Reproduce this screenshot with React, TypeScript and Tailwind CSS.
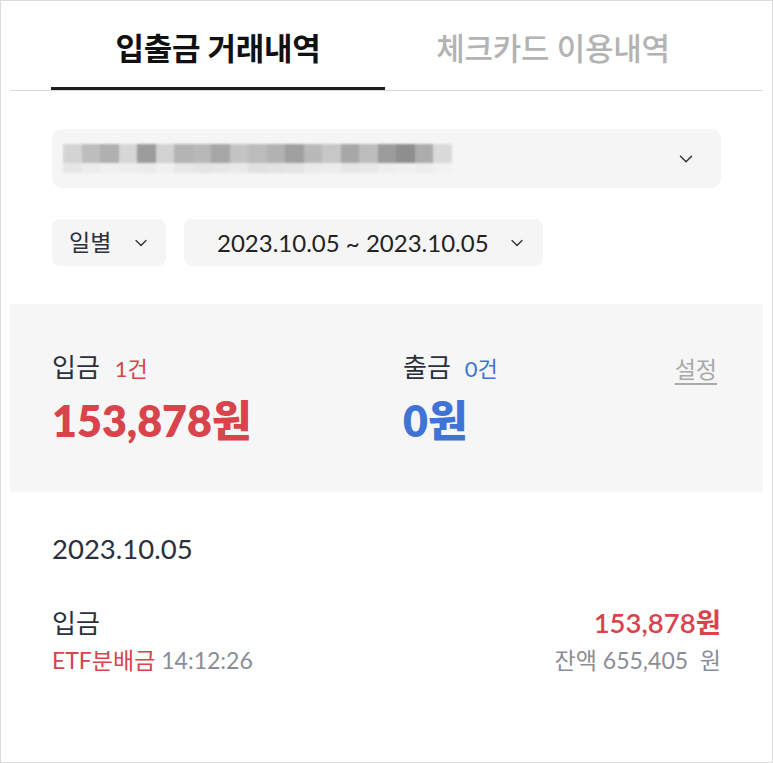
import { ChevronDown } from "lucide-react";

const font = { fontFamily: "Lato, 'Noto Sans CJK KR', sans-serif" };

const mosaic = [
  "#d4d4d4", "#bdbdbd", "#b0b0b0", "#d6d6d6", "#9c9c9c", "#d2d2d2", "#b4b4b4",
  "#b8b8b8", "#a6a6a6", "#c4c4c4", "#bcbcbc", "#b2b2b2", "#9f9f9f", "#b9b9b9",
  "#c7c7c7", "#a7a7a7", "#bdbdbd", "#9b9b9b", "#8e8e8e", "#acacac", "#dadada",
];

const mosaicLow = [
  "#e6e6e6", "#ececec", "#f0f0f0", "#eeeeee", "#ebebeb", "#f0f0f0", "#e8e8e8",
  "#e4e4e4", "#e6e6e6", "#e9e9e9", "#e0e0e0", "#e2e2e2", "#e4e4e4", "#eaeaea",
  "#ececec", "#e6e6e6", "#e8e8e8", "#eeeeee", "#f0f0f0", "#ededed", "#f2f2f2",
];

export default function App() {
  return (
    <div
      className="h-[763px] w-[773px] border border-[#dcdcdc] bg-white text-[#2c303b]"
      style={font}
    >
      {/* tabs */}
      <div className="mx-[9px] flex border-b border-[#d9d9d9] px-[41px]">
        <div className="flex h-[89px] w-[334px] items-center justify-center border-b-[3px] border-[#1e1e1e] pt-[8px] text-[31px] font-bold tracking-[-0.3px] text-[#111]">
          입출금 거래내역
        </div>
        <div className="flex h-[89px] w-[336px] items-center justify-center pt-[5px] text-[31px] font-medium tracking-[-0.3px] text-[#b3b3b3]">
          체크카드 이용내역
        </div>
      </div>

      <div className="px-[51px]">
        {/* account select */}
        <div className="mt-[38px] flex h-[59px] items-center justify-between rounded-[10px] bg-[#f5f5f5] pl-[11px] pr-[24px]">
          <div className="flex flex-col blur-[1.2px]">
            <div className="flex">
              {mosaic.map((c, i) => (
                <div key={i} className="h-[19px] w-[18.5px]" style={{ background: c }} />
              ))}
            </div>
            <div className="flex">
              {mosaicLow.map((c, i) => (
                <div key={i} className="h-[10px] w-[18.5px]" style={{ background: c }} />
              ))}
            </div>
          </div>
          <ChevronDown className="h-[22px] w-[22px] text-[#333]" strokeWidth={1.6} />
        </div>

        {/* filters */}
        <div className="mt-[31px] flex gap-[18px]">
          <div className="flex h-[47px] w-[114px] items-center gap-[20px] rounded-[8px] bg-[#f5f5f5] pl-[17px] text-[23px]">
            일별
            <ChevronDown className="h-[20px] w-[20px] text-[#333]" strokeWidth={1.6} />
          </div>
          <div className="flex h-[47px] w-[359px] items-center gap-[18px] rounded-[8px] bg-[#f5f5f5] pl-[33px] text-[24px] text-[#222]">
            2023.10.05 ~ 2023.10.05
            <ChevronDown className="h-[20px] w-[20px] text-[#333]" strokeWidth={1.6} />
          </div>
        </div>
      </div>

      {/* summary */}
      <div className="mx-[9px] mt-[38px] flex h-[188px] bg-[#f6f6f6] pl-[42px] pr-[46px] pt-[44px]">
        <div className="w-[351px]">
          <div className="flex items-baseline gap-[15px]">
            <span className="text-[26px]">입금</span>
            <span className="text-[22px] text-[#d9434b]">1건</span>
          </div>
          <div className="mt-[8px] text-[43px] font-extrabold leading-[52px] text-[#d9434b]">153,878원</div>
        </div>
        <div className="flex-1">
          <div className="flex items-baseline gap-[14px]">
            <span className="text-[26px]">출금</span>
            <span className="text-[22px] text-[#3f74d6]">0건</span>
          </div>
          <div className="mt-[8px] text-[43px] font-extrabold leading-[52px] text-[#3f74d6]">0원</div>
        </div>
        <div className="pt-[4px] text-[23px] text-[#a9a9a9] underline underline-offset-[5px]">설정</div>
      </div>

      {/* list */}
      <div className="px-[51px] pt-[36px]">
        <div className="text-[27.5px]">2023.10.05</div>
        <div className="mt-[36px] flex justify-between">
          <div>
            <div className="text-[26px] leading-[36px]">입금</div>
            <div className="mt-[2px] text-[23px]">
              <span className="text-[#d9434b]">ETF분배금</span>{" "}
              <span className="text-[#8a8d96]">14:12:26</span>
            </div>
          </div>
          <div className="text-right">
            <div className="text-[27.5px] font-semibold leading-[36px] text-[#d9434b]">153,878원</div>
            <div className="mt-[2px] whitespace-pre text-[23px] text-[#8a8d96]">잔액 655,405  원</div>
          </div>
        </div>
      </div>
    </div>
  );
}
